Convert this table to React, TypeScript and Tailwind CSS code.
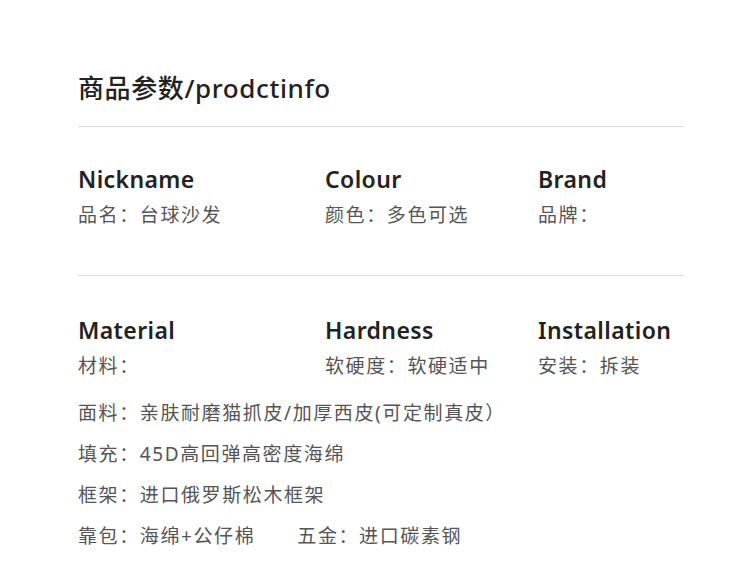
const font = { fontFamily: '"Noto Sans", "Noto Sans CJK SC", sans-serif' }

const rows = [
  [
    { en: "Nickname", zh: "品名：台球沙发" },
    { en: "Colour", zh: "颜色：多色可选" },
    { en: "Brand", zh: "品牌：" },
  ],
  [
    { en: "Material", zh: "材料：" },
    { en: "Hardness", zh: "软硬度：软硬适中" },
    { en: "Installation", zh: "安装：拆装" },
  ],
]

function Cell({ en, zh }: { en: string; zh: string }) {
  return (
    <div className="flex flex-col">
      <div className="text-[23px] leading-[30px] font-semibold tracking-[0.4px] text-[#222]">{en}</div>
      <div className="mt-[8px] text-[19px] leading-[26px] tracking-[1.6px] text-[#555]">{zh}</div>
    </div>
  )
}

export default function App() {
  return (
    <div className="w-[750px] h-[579px] bg-white overflow-hidden" style={font}>
      <div className="pl-[78px] pr-[66px] pt-[71px]">
        <h1 className="text-[26px] leading-[34px] font-medium tracking-[0.6px] text-[#222]">商品参数/prodctinfo</h1>
        <div className="mt-[21px] h-px bg-[#dcdcdc]" />
        <div className="grid grid-cols-[247px_213px_1fr] pt-[37px] pb-[47px]">
          {rows[0].map((c) => (
            <Cell key={c.en} {...c} />
          ))}
        </div>
        <div className="h-px bg-[#dcdcdc]" />
        <div className="grid grid-cols-[247px_213px_1fr] pt-[39px]">
          {rows[1].map((c) => (
            <Cell key={c.en} {...c} />
          ))}
        </div>
        <div className="mt-[21px] flex flex-col gap-[15px] text-[19px] leading-[26px] tracking-[1.6px] text-[#555]">
          <div>面料：亲肤耐磨猫抓皮/加厚西皮(可定制真皮）</div>
          <div>填充：45D高回弹高密度海绵</div>
          <div>框架：进口俄罗斯松木框架</div>
          <div className="flex gap-[42px]">
            <span>靠包：海绵+公仔棉</span>
            <span>五金：进口碳素钢</span>
          </div>
        </div>
      </div>
    </div>
  )
}
